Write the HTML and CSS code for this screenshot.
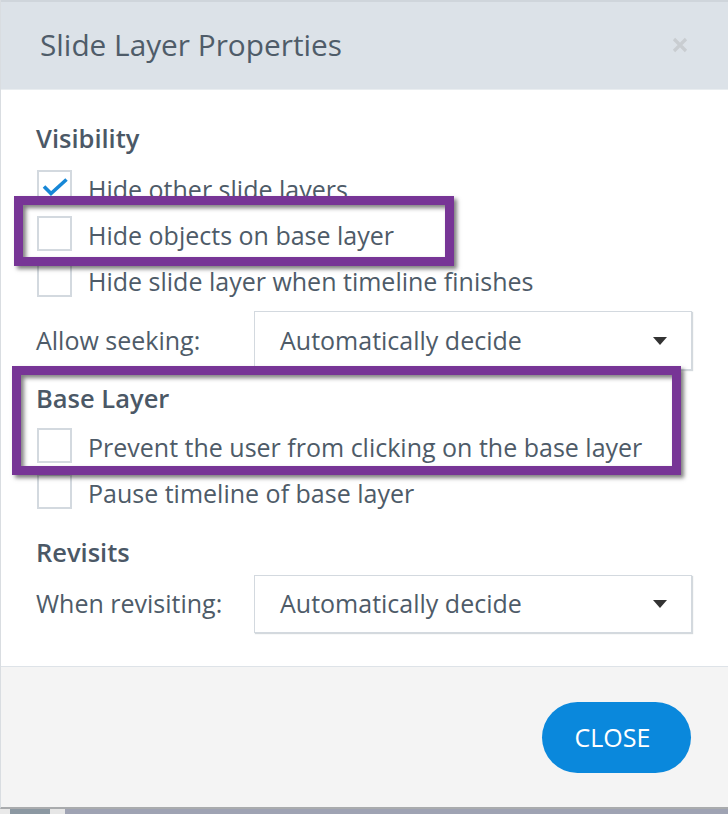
FILE: index.html
```html
<!DOCTYPE html>
<html lang="en">
<head>
<meta charset="utf-8">
<title>Slide Layer Properties</title>
<link rel="stylesheet" href="styles.css">
</head>
<body>
<div class="page">
  <div class="dialog">
    <header class="dlg-head">
      <h1 class="dlg-title">Slide Layer Properties</h1>
      <span class="dlg-x" aria-label="Close">
        <svg width="20" height="20" viewBox="0 0 20 20"><path d="M4 4 L16 16 M16 4 L4 16" stroke="#c9cdd1" stroke-width="3.2" fill="none"/></svg>
      </span>
    </header>
    <div class="dlg-body">
      <section class="group">
        <h2 class="group-title">Visibility</h2>
        <label class="check"><span class="box"><svg width="35" height="35" viewBox="0 0 35 35"><path d="M7 16.5 L14 23.5 L29.5 9.5" stroke="#1787d6" stroke-width="3.6" fill="none"/></svg></span><span class="check-label">Hide other slide layers</span></label>
        <label class="check"><span class="box"></span><span class="check-label">Hide objects on base layer</span></label>
        <label class="check"><span class="box"></span><span class="check-label">Hide slide layer when timeline finishes</span></label>
        <div class="field">
          <span class="field-label">Allow seeking:</span>
          <div class="select"><span>Automatically decide</span><span class="caret"></span></div>
        </div>
      </section>
      <section class="group g2">
        <h2 class="group-title">Base Layer</h2>
        <label class="check"><span class="box"></span><span class="check-label">Prevent the user from clicking on the base layer</span></label>
        <label class="check"><span class="box"></span><span class="check-label">Pause timeline of base layer</span></label>
      </section>
      <section class="group g3">
        <h2 class="group-title">Revisits</h2>
        <div class="field f2">
          <span class="field-label">When revisiting:</span>
          <div class="select s2"><span>Automatically decide</span><span class="caret"></span></div>
        </div>
      </section>
    </div>
    <footer class="dlg-foot">
      <button class="btn-close">CLOSE</button>
    </footer>
  </div>
  <div class="backdrop">
    <span class="bd-a"></span><span class="bd-b"></span><span class="bd-c"></span><span class="bd-d"></span>
  </div>
  <div class="annot annot-1"></div>
  <div class="annot annot-2"></div>
</div>
</body>
</html>
```

FILE: styles.css
```css
* { box-sizing: border-box; }
html, body { margin: 0; padding: 0; background: #ffffff; }
body {
  font-family: "Open Sans", "Noto Sans", sans-serif;
  color: #4e5b68;
  width: 728px;
  height: 814px;
  overflow: hidden;
}
.page { position: relative; width: 728px; height: 814px; }

.dialog {
  display: flex;
  flex-direction: column;
  width: 728px;
  height: 809px;
  border-left: 1px solid #d9dde1;
  border-bottom: 2px solid #a9abad;
}

.dlg-head {
  height: 90px;
  flex: none;
  background: #dce2e8;
  border-top: 2px solid #cfd5db;
  border-bottom: 1px solid #e9edf0;
  display: flex;
  align-items: center;
  justify-content: space-between;
  padding: 0 38px 0 39px;
}
.dlg-title {
  margin: 0;
  font-weight: 400;
  font-size: 29.8px;
  color: #4f5c69;
  line-height: 1;
  padding-bottom: 2px;
}
.dlg-x { display: flex; margin-bottom: 2px; }

.dlg-body {
  flex: 1;
  padding: 33px 36px 0 35px;
}
.group { display: flex; flex-direction: column; }
.group-title {
  margin: 0 0 11px 0;
  font-size: 25.5px;
  font-weight: 600;
  line-height: 30px;
  height: 30px;
  color: #4b5866;
}
.g2 { margin-top: 13px; }
.g2 .group-title { margin-bottom: 9px; }
.g3 { margin-top: 23px; }
.g3 .group-title { margin-bottom: 8px; }

.check {
  display: flex;
  align-items: center;
  height: 46px;
  font-size: 25px;
}
.box {
  width: 35px;
  height: 35px;
  flex: none;
  border: 2px solid #d3d9df;
  background: #fff;
  margin-left: 1px;
  margin-right: 16px;
  position: relative;
}
.box svg { position: absolute; left: -2px; top: -2px; }
.check-label { color: #4e5b68; padding-top: 3px; }

.field {
  display: flex;
  align-items: center;
  margin-top: 9px;
  font-size: 25px;
}
.f2 { margin-top: 0; }
.field-label { width: 218px; flex: none; padding-bottom: 2px; }
.select {
  width: 439px;
  height: 59px;
  border: 1px solid #d3d9df;
  box-shadow: 1px 1px 1px rgba(160, 170, 180, 0.45);
  display: flex;
  align-items: center;
  justify-content: space-between;
  padding: 0 24px 0 25px;
  color: #4e5b68;
  background: #fff;
}
.select span:first-child { padding-bottom: 2px; }
.s2 { height: 58px; }
.caret {
  width: 0;
  height: 0;
  border-left: 7px solid transparent;
  border-right: 7px solid transparent;
  border-top: 8px solid #333;
}

.dlg-foot {
  flex: none;
  height: 141px;
  background: #f4f4f4;
  border-top: 1px solid #dee3e8;
  display: flex;
  justify-content: flex-end;
  align-items: flex-start;
  padding: 35px 37px 0 0;
}
.btn-close {
  width: 149px;
  height: 71px;
  border: none;
  border-radius: 36px;
  background: #0a88dc;
  color: #fff;
  font-family: "Open Sans", "Noto Sans", sans-serif;
  font-size: 25px;
  padding: 0 8px 2px 0;
}

.backdrop { display: flex; height: 5px; background: #9fa3b3; }
.bd-a { width: 10px; background: #e9e9e9; }
.bd-b { width: 40px; background: #8c98a2; }
.bd-c { width: 15px; background: #e6e6e6; }
.bd-d { flex: 1; }

.annot {
  position: absolute;
  border: 9px solid #773596;
  box-shadow: 3px 3px 4px rgba(0, 0, 0, 0.5), inset 3px 3px 4px rgba(0, 0, 0, 0.5);
}
.annot-1 { left: 14px; top: 196px; width: 440px; height: 70px; }
.annot-2 { left: 12px; top: 366px; width: 669px; height: 109px; }
```
